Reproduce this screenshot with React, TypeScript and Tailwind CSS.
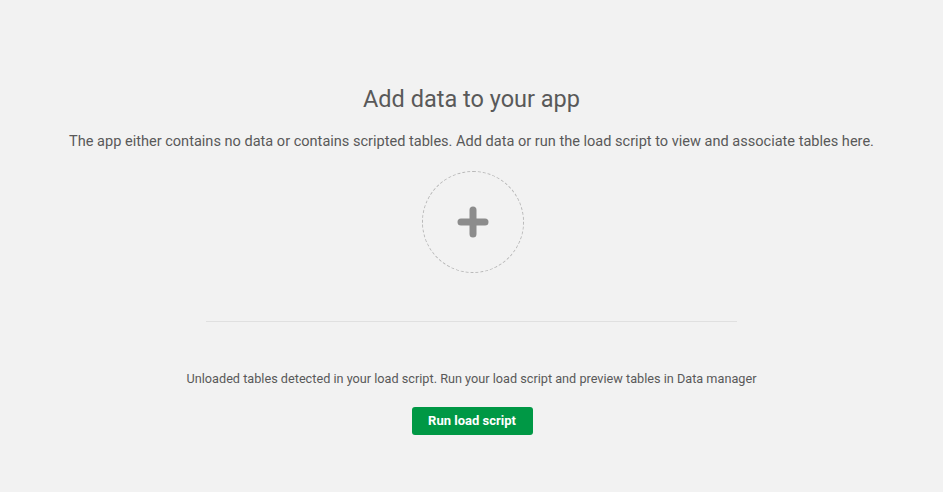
import React from 'react';

const PlusIcon: React.FC = () => (
  <svg width="32" height="32" viewBox="0 0 32 32" aria-hidden="true">
    <path d="M16 4v24M4 16h24" stroke="#8c8c8c" strokeWidth="7" strokeLinecap="round" fill="none" />
  </svg>
);

export default function App() {
  return (
    <div
      className="min-h-[492px] w-full bg-[#f2f2f2] flex flex-col items-center text-[#595959]"
      style={{ fontFamily: 'Roboto, "Liberation Sans", sans-serif' }}
    >
      <h1 className="mt-[85px] text-[23.5px] leading-[28px] font-normal">Add data to your app</h1>
      <p className="mt-[19px] text-[14.55px] leading-[20px]">
        The app either contains no data or contains scripted tables. Add data or run the load script to view and
        associate tables here.
      </p>
      <button
        type="button"
        className="mt-[19px] ml-[2px] w-[102px] h-[102px] rounded-full border border-dashed border-[#b8b8b8] flex items-center justify-center"
      >
        <PlusIcon />
      </button>
      <div className="mt-[48px] w-[531px] h-px bg-[#e0e0e0]" />
      <p className="mt-[48px] text-[12.7px] leading-[18px]">
        Unloaded tables detected in your load script. Run your load script and preview tables in Data manager
      </p>
      <button
        type="button"
        className="mt-[19px] ml-px w-[121px] h-[28px] rounded-[3px] bg-[#009845] text-white text-[13px] font-bold"
      >
        Run load script
      </button>
    </div>
  );
}
